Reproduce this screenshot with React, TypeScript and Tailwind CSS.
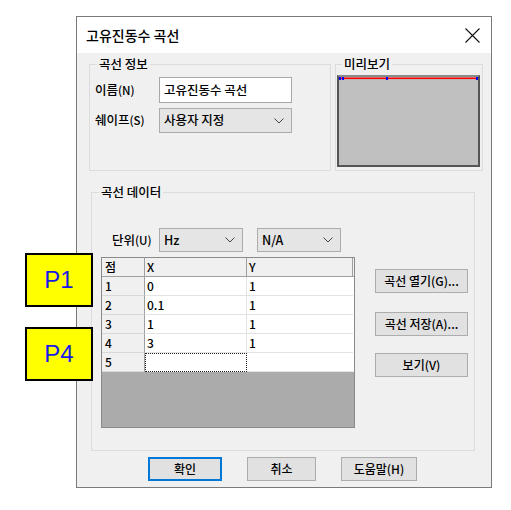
import React from "react";

const F = "font-['Noto_Sans_CJK_KR','Noto_Sans',sans-serif]";

function Chevron() {
  return (
    <svg width="10" height="6" viewBox="0 0 10 6" className="shrink-0">
      <path d="M0.5 0.5 L5 5 L9.5 0.5" fill="none" stroke="#444" strokeWidth="1" />
    </svg>
  );
}

function Select({ w, label }: { w: string; label: string }) {
  return (
    <div
      className={`${w} h-full flex items-center justify-between bg-[#e5e5e5] border border-[#acacac] pl-[4px] pr-[7px] text-[12.5px] text-black`}
    >
      <span>{label}</span>
      <Chevron />
    </div>
  );
}

function Btn({ w, label, def }: { w: string; label: string; def?: boolean }) {
  return (
    <div
      className={`${w} h-[24px] flex items-center justify-center bg-[#e1e1e1] text-[12px] text-black ${
        def ? "border-2 border-[#0078d7]" : "border border-[#adadad]"
      }`}
    >
      {label}
    </div>
  );
}

const rows = [
  ["1", "0", "1"],
  ["2", "0.1", "1"],
  ["3", "1", "1"],
  ["4", "3", "1"],
];

export default function App() {
  return (
    <div className={`relative w-[511px] h-[510px] bg-white pt-[16px] pl-[76px] font-medium ${F}`}>
      <div className="w-[416px] h-[472px] border border-[#7a7a7a] bg-[#f0f0f0] flex flex-col">
        {/* title bar */}
        <div className="h-[36px] bg-white flex items-center justify-between pl-[9px] pr-[11px]">
          <span className="text-[14px] text-black">고유진동수 곡선</span>
          <svg width="15" height="15" viewBox="0 0 15 15">
            <path d="M0.5 0.5 L14.5 14.5 M14.5 0.5 L0.5 14.5" stroke="#111" strokeWidth="1.1" fill="none" />
          </svg>
        </div>

        {/* body */}
        <div className="flex flex-col pt-[11px]">
          <div className="flex pl-[12px] gap-[4px]">
            {/* info group */}
            <div className="relative w-[242px] h-[107px] border border-[#dcdcdc]">
              <span className="absolute -top-[10px] left-[7px] bg-[#f0f0f0] px-[2px] text-[12.5px] leading-[18px] text-black">
                곡선 정보
              </span>
              <div className="flex flex-col pt-[12px]">
                <div className="flex items-center h-[26px]">
                  <span className="w-[69px] pl-[5px] text-[12.5px] text-black">
                    이름<span className="text-[11.5px]">(N)</span>
                  </span>
                  <div className="w-[133px] h-[26px] bg-white border border-[#a8a8a8] flex items-center pl-[4px] text-[12.5px] text-black">
                    고유진동수 곡선
                  </div>
                </div>
                <div className="flex items-center h-[25px] mt-[5px]">
                  <span className="w-[69px] pl-[5px] text-[12.5px] text-black">
                    쉐이프<span className="text-[11.5px]">(S)</span>
                  </span>
                  <Select w="w-[133px]" label="사용자 지정" />
                </div>
              </div>
            </div>

            {/* preview group */}
            <div className="relative w-[148px] h-[107px] border border-[#dcdcdc]">
              <span className="absolute -top-[10px] left-[6px] bg-[#f0f0f0] px-[2px] text-[12.5px] leading-[18px] text-black">
                미리보기
              </span>
              <div className="ml-[1px] mt-[10px] w-[143px] h-[92px] bg-[#c0c0c0] border-2 border-[#555555] border-t-[#8a8a8a]">
                <svg width="139" height="6" viewBox="0 0 139 6" className="block">
                  <rect x="0" y="0.5" width="139" height="1.6" fill="#ff0000" />
                  <rect x="0" y="0" width="2" height="3" fill="#0000ff" />
                  <rect x="3" y="0" width="2" height="3" fill="#0000ff" />
                  <rect x="47" y="0" width="2" height="3" fill="#0000ff" />
                  <rect x="137" y="0" width="2" height="3" fill="#0000ff" />
                </svg>
              </div>
            </div>
          </div>

          {/* data group */}
          <div className="relative ml-[14px] mt-[21px] w-[384px] h-[259px] border border-[#dcdcdc]">
            <span className="absolute -top-[10px] left-[7px] bg-[#f0f0f0] px-[2px] text-[12.5px] leading-[18px] text-black">
              곡선 데이터
            </span>
            <div className="flex flex-col pt-[35px]">
              <div className="flex items-center h-[24px]">
                <span className="w-[67px] pl-[20px] text-[12.5px] text-black">
                  단위<span className="text-[11.5px]">(U)</span>
                </span>
                <Select w="w-[84px]" label="Hz" />
                <div className="w-[14px]" />
                <Select w="w-[84px]" label="N/A" />
              </div>

              <div className="flex mt-[5px] pl-[9px]">
                {/* table */}
                <div className="w-[254px] h-[171px] border border-[#8a8a8a] bg-[#ababab] flex flex-col text-[12px] text-black">
                  <div className="flex h-[19px] shrink-0">
                    <div className="w-[43px] bg-[#f0f0f0] border-r border-b border-[#a0a0a0] pl-[3px] leading-[18px]">
                      점
                    </div>
                    <div className="w-[102px] bg-[#f0f0f0] border-r border-b border-[#a0a0a0] pl-[2px] leading-[18px]">
                      X
                    </div>
                    <div className="w-[106px] bg-[#f0f0f0] border-r border-b border-[#a0a0a0] pl-[2px] leading-[18px]">
                      Y
                    </div>
                    <div className="flex-1 bg-[#f0f0f0] border-b border-[#a0a0a0]" />
                  </div>
                  {rows.map((r) => (
                    <div key={r[0]} className="flex h-[19px] shrink-0">
                      <div className="w-[43px] bg-[#f0f0f0] border-r border-b border-r-[#a0a0a0] border-b-[#d8d8d8] pl-[3px] leading-[18px]">
                        {r[0]}
                      </div>
                      <div className="w-[102px] bg-white border-r border-b border-[#e3e3e3] pl-[2px] leading-[18px]">
                        {r[1]}
                      </div>
                      <div className="w-[106px] bg-white border-b border-[#e3e3e3] pl-[2px] leading-[18px]">
                        {r[2]}
                      </div>
                      <div className="flex-1 bg-white" />
                    </div>
                  ))}
                  <div className="flex h-[19px] shrink-0">
                    <div className="w-[43px] bg-[#f0f0f0] border-r border-b border-r-[#a0a0a0] border-b-[#d8d8d8] pl-[3px] leading-[18px]">
                      5
                    </div>
                    <div className="w-[102px] bg-white border border-dotted border-[#222]" />
                    <div className="w-[106px] bg-white border-b border-[#e3e3e3]" />
                    <div className="flex-1 bg-white" />
                  </div>
                  <div className="flex-1 bg-[#ababab]" />
                </div>

                {/* side buttons */}
                <div className="flex flex-col pl-[20px] pt-[12px]">
                  <Btn w="w-[93px]" label="곡선 열기(G)..." />
                  <div className="h-[19px]" />
                  <Btn w="w-[93px]" label="곡선 저장(A)..." />
                  <div className="h-[17px]" />
                  <Btn w="w-[93px]" label="보기(V)" />
                </div>
              </div>
            </div>
          </div>

          {/* bottom buttons */}
          <div className="flex pl-[71px] mt-[6px] gap-[25px]">
            <Btn w="w-[74px]" label="확인" def />
            <Btn w="w-[69px]" label="취소" />
            <Btn w="w-[76px]" label="도움말(H)" />
          </div>
        </div>
      </div>

      {/* annotations */}
      <div className="absolute left-[25px] top-[253px] w-[68px] h-[54px] border-2 border-black bg-[#ffff00] flex items-center justify-center font-['Liberation_Sans',Arial,sans-serif] font-normal text-[24px] text-[#1a1ae6]">
        P1
      </div>
      <div className="absolute left-[25px] top-[327px] w-[68px] h-[54px] border-2 border-black bg-[#ffff00] flex items-center justify-center font-['Liberation_Sans',Arial,sans-serif] font-normal text-[24px] text-[#1a1ae6]">
        P4
      </div>
    </div>
  );
}
